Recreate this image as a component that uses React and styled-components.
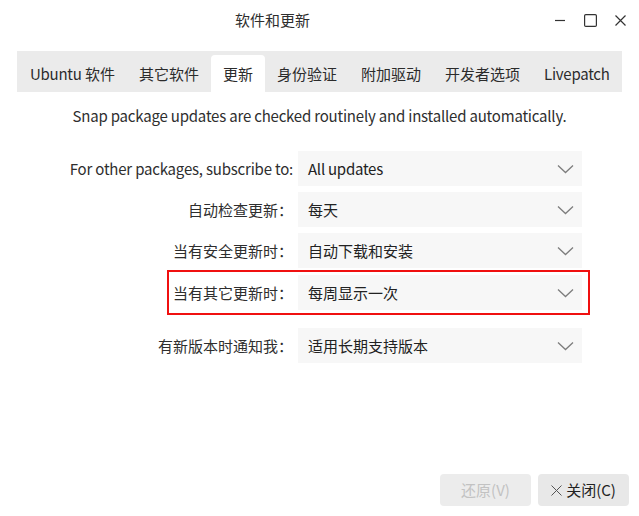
import React from "react";
import styled, { createGlobalStyle } from "styled-components";

const Global = createGlobalStyle`
  html, body { margin: 0; padding: 0; background: #ffffff; }
  body { font-family: "Noto Sans CJK SC", "Noto Sans", sans-serif; font-size: 15px; color: #2e2e2e; }
  * { box-sizing: border-box; }
`;

const Window = styled.div`
  width: 639px;
  height: 516px;
  display: flex;
  flex-direction: column;
  background: #fff;
`;

const TitleBar = styled.div`
  height: 40px;
  display: flex;
  align-items: center;
`;

const Title = styled.div`
  flex: 1;
  text-align: center;
  font-size: 15px;
  color: #2e2e2e;
  line-height: 20px;
`;

const Controls = styled.div`
  display: flex;
  align-items: center;
  padding-right: 4px;
`;

const CtlBtn = styled.div`
  width: 30px;
  height: 30px;
  display: flex;
  align-items: center;
  justify-content: center;
`;

const TabBar = styled.div`
  align-self: flex-start;
  margin: 11px 0 0 17px;
  padding-left: 1px;
  height: 41px;
  background: #ebebeb;
  display: flex;
  align-items: stretch;
`;

const Tab = styled.div`
  margin-top: ${(p) => (p.$active ? "4px" : "0")};
  padding: ${(p) => (p.$active ? "0 12px" : "4px 12px 0")};
  display: flex;
  align-items: center;
  justify-content: center;
  background: ${(p) => (p.$active ? "#ffffff" : "transparent")};
  border-radius: 4px 4px 0 0;
  color: #2b2b2b;
  white-space: nowrap;
  line-height: 20px;
`;

const TabText = styled.span`
  white-space: pre;
`;

const Latin = styled.span`
  letter-spacing: -0.25px;
`;

const Notice = styled.div`
  margin-top: 14px;
  text-align: center;
  line-height: 20px;
  color: #2e2e2e;
  letter-spacing: -0.2px;
`;

const Form = styled.div`
  display: flex;
  flex-direction: column;
  margin-top: 25px;
`;

const Row = styled.div`
  display: flex;
  align-items: center;
  justify-content: flex-end;
  gap: 5px;
  margin-top: ${(p) => p.$top || 0}px;
  margin-right: 57px;
`;

const HighlightRow = styled.div`
  align-self: flex-end;
  display: flex;
  align-items: center;
  gap: 5px;
  margin-top: ${(p) => p.$top || 0}px;
  margin-right: 49px;
  border: 2px solid #f01010;
  padding: 3px 6px 3px 4px;
`;

const Label = styled.div`
  text-align: right;
  white-space: nowrap;
  color: #2e2e2e;
  line-height: 20px;
  letter-spacing: ${(p) => (p.$latin ? "-0.2px" : "0")};
`;

const Combo = styled.div`
  width: 284px;
  height: 35px;
  background: #f7f7f7;
  display: flex;
  align-items: center;
  justify-content: space-between;
  padding: 0 8px 0 10px;
  color: #222;
  line-height: 20px;
`;

const Footer = styled.div`
  margin-top: auto;
  display: flex;
  justify-content: flex-end;
  gap: 7px;
  padding: 0 10px 10px 0;
`;

const Button = styled.div`
  width: 91px;
  height: 32px;
  border-radius: 4px;
  background: ${(p) => (p.$disabled ? "#ececec" : "#e8e8e8")};
  color: ${(p) => (p.$disabled ? "#c2c2c2" : "#222")};
  display: flex;
  align-items: center;
  justify-content: center;
  gap: 4px;
  line-height: 20px;
`;

const Chevron = () => (
  <svg width="17" height="10" viewBox="0 0 17 10">
    <path d="M1 1.5 L8.5 8.5 L16 1.5" fill="none" stroke="#7d7d7d" strokeWidth="1.3" />
  </svg>
);

const XIcon = ({ size = 11, color = "#333", w = 1.2 }) => (
  <svg width={size} height={size} viewBox="0 0 11 11">
    <path d="M0.5 0.5 L10.5 10.5 M10.5 0.5 L0.5 10.5" stroke={color} strokeWidth={w} fill="none" />
  </svg>
);

const tabs = [
  { key: "ubuntu", label: <><Latin>Ubuntu</Latin>{" 软件"}</> },
  { key: "other", label: "其它软件" },
  { key: "updates", label: "更新", active: true },
  { key: "auth", label: "身份验证" },
  { key: "drivers", label: "附加驱动" },
  { key: "dev", label: "开发者选项" },
  { key: "live", label: <Latin>Livepatch</Latin> },
];

export default function App() {
  return (
    <Window>
      <Global />
      <TitleBar>
        <Title>软件和更新</Title>
        <Controls>
          <CtlBtn>
            <svg width="12" height="12" viewBox="0 0 12 12">
              <path d="M1 6.5 H11" stroke="#333" strokeWidth="1.2" />
            </svg>
          </CtlBtn>
          <CtlBtn>
            <svg width="13" height="13" viewBox="0 0 13 13">
              <rect x="0.6" y="0.6" width="11.8" height="11.8" rx="1.2" fill="none" stroke="#333" strokeWidth="1.2" />
            </svg>
          </CtlBtn>
          <CtlBtn>
            <XIcon size={11} />
          </CtlBtn>
        </Controls>
      </TitleBar>

      <TabBar>
        {tabs.map((t) => (
          <Tab key={t.key} $active={t.active}>
            <TabText>{t.label}</TabText>
          </Tab>
        ))}
      </TabBar>

      <Notice>Snap package updates are checked routinely and installed automatically.</Notice>

      <Form>
        <Row>
          <Label $latin>For other packages, subscribe to:</Label>
          <Combo><Latin>All updates</Latin><Chevron /></Combo>
        </Row>
        <Row $top={6}>
          <Label>自动检查更新：</Label>
          <Combo>每天<Chevron /></Combo>
        </Row>
        <Row $top={6}>
          <Label>当有安全更新时：</Label>
          <Combo>自动下载和安装<Chevron /></Combo>
        </Row>
        <HighlightRow $top={2}>
          <Label>当有其它更新时：</Label>
          <Combo>每周显示一次<Chevron /></Combo>
        </HighlightRow>
        <Row $top={13}>
          <Label>有新版本时通知我：</Label>
          <Combo>适用长期支持版本<Chevron /></Combo>
        </Row>
      </Form>

      <Footer>
        <Button $disabled>还原(V)</Button>
        <Button>
          <XIcon size={11} color="#555" w={1} />
          关闭(C)
        </Button>
      </Footer>
    </Window>
  );
}
